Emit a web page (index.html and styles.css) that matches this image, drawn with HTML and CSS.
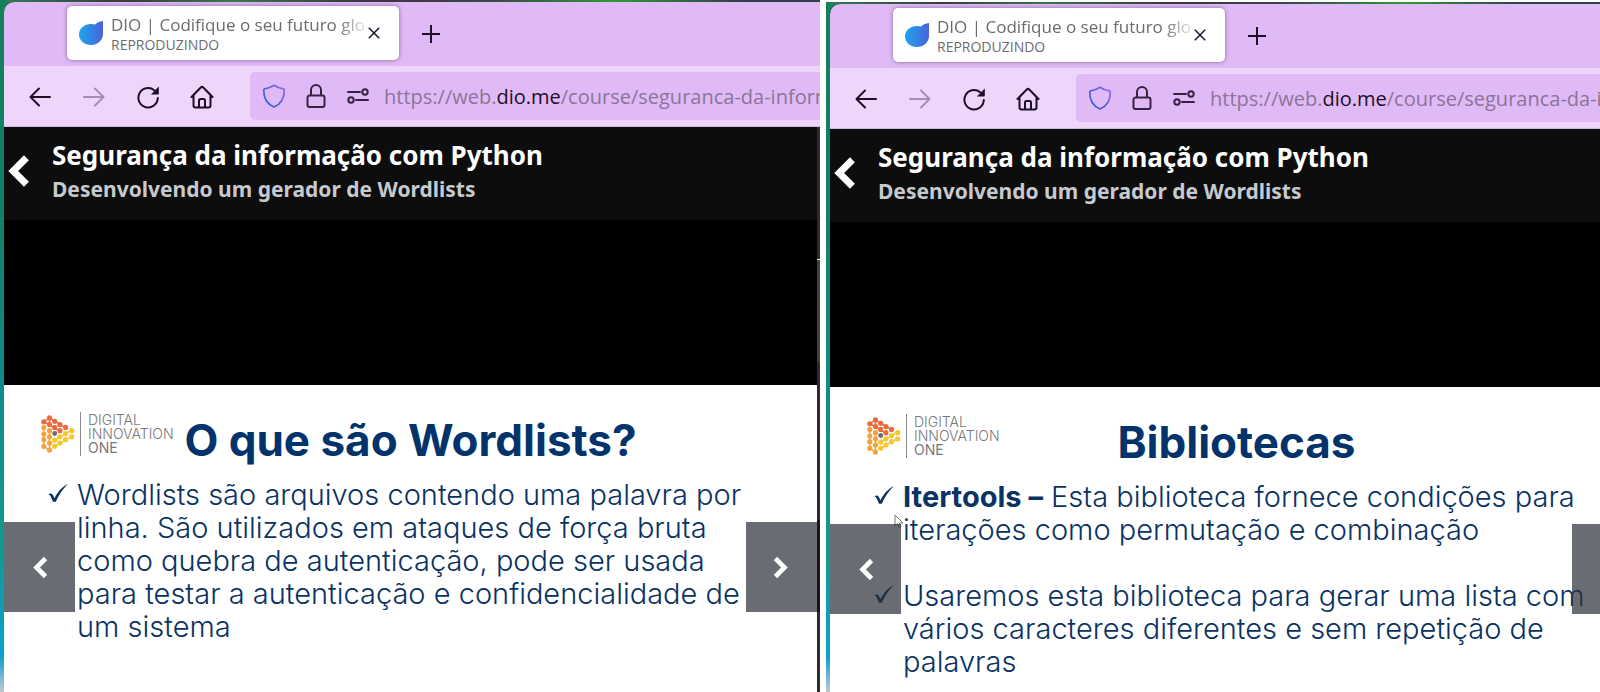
FILE: index.html
```html
<!DOCTYPE html>
<html lang="pt-BR">
<head>
<meta charset="utf-8">
<title>DIO | Codifique o seu futuro global</title>
<link rel="stylesheet" href="styles.css">
</head>
<body>
<svg class="defs" width="0" height="0" aria-hidden="true">
  <defs>
    <linearGradient id="drop-fill" x1="0" y1="0" x2="1" y2="0"><stop offset="0" stop-color="#1ba6ec"/><stop offset="1" stop-color="#4a62da"/></linearGradient>
    <linearGradient id="shield-stroke" x1="0" y1="1" x2="1" y2="0"><stop offset="0.2" stop-color="#3a5bd0"/><stop offset="1" stop-color="#9a63ee"/></linearGradient>
    <symbol id="drop" viewBox="0 0 24 24"><path d="M24 0v13.500C23.500 19.500 18.500 24 12 24 5.300 24 0 19.500 0 13.500S5.500 3 12 3c1.500 0 2.800.2 4 .6C18 1.500 20.800.3 24 0z" fill="url(#drop-fill)"/></symbol>
    <symbol id="close" viewBox="0 0 12 12"><path d="M.8.8l10.400 10.400M11.200.8L.8 11.200" stroke="currentColor" stroke-width="1.500" fill="none"/></symbol>
    <symbol id="plus" viewBox="0 0 18 18"><path d="M9 0v18M0 9h18" stroke="currentColor" stroke-width="2" fill="none"/></symbol>
    <symbol id="back" viewBox="0 0 24 24"><path d="M22 12H2.500M11 3.500L2.500 12l8.500 8.500" stroke="currentColor" stroke-width="2" fill="none" stroke-linecap="round" stroke-linejoin="round"/></symbol>
    <symbol id="forward" viewBox="0 0 24 24"><path d="M2 12h19.500M13 3.500l8.500 8.500-8.500 8.500" stroke="currentColor" stroke-width="2" fill="none" stroke-linecap="round" stroke-linejoin="round"/></symbol>
    <symbol id="reload" viewBox="0 0 24 24"><path d="M21.800 13A9.700 9.700 0 1 1 18.200 5.200" stroke="currentColor" stroke-width="2" fill="none" stroke-linecap="round"/><path d="M22.800 1.500v7.200a.7.700 0 0 1-.7.700h-7.200z" fill="currentColor"/></symbol>
    <symbol id="home" viewBox="0 0 24 24"><path d="M1.500 12L11 2.200q1-.9 2 0L22.500 12M3.500 10.500v10a2 2 0 0 0 2 2h13a2 2 0 0 0 2-2v-10M9 22.500v-7a1.500 1.500 0 0 1 1.500-1.500h3a1.500 1.500 0 0 1 1.500 1.500v7" stroke="currentColor" stroke-width="2" fill="none" stroke-linecap="round" stroke-linejoin="round"/></symbol>
    <symbol id="shield" viewBox="0 0 24 24"><path d="M12 1.200c3 2 6.500 3.200 9.300 3.600.7.100 1 .5 1 1.200C22.300 14 19.500 20 12 23 4.500 20 1.700 14 1.700 6c0-.7.300-1.100 1-1.200C5.500 4.400 9 3.200 12 1.200z" stroke="url(#shield-stroke)" stroke-width="1.700" fill="none" stroke-linejoin="round"/></symbol>
    <symbol id="lock" viewBox="0 0 20 24"><path d="M5 11.500V6a5 5 0 0 1 10 0v5.500M3.500 11.500h13a2 2 0 0 1 2 2V21a2 2 0 0 1-2 2h-13a2 2 0 0 1-2-2v-7.500a2 2 0 0 1 2-2z" stroke="currentColor" stroke-width="2" fill="none"/></symbol>
    <symbol id="sliders" viewBox="0 0 22 16"><g stroke="currentColor" stroke-width="2" fill="none"><path d="M1 4h12M9 12h12" stroke-linecap="round"/><circle cx="18" cy="4" r="2.700"/><circle cx="4" cy="12" r="2.700"/></g></symbol>
    <symbol id="chevron-left" viewBox="0 0 20 32"><path d="M17 3.500L4.500 16 17 28.500" stroke="currentColor" stroke-width="6.500" fill="none"/></symbol>
    <symbol id="chevron-right" viewBox="0 0 20 32"><path d="M3 3.500L15.500 16 3 28.500" stroke="currentColor" stroke-width="6.500" fill="none"/></symbol>
    <symbol id="check" viewBox="0 0 20 18"><path d="M.3 10.500c1.700-1.600 3.700-1.300 4.600.6l1.600 3.200C9.500 8 13.500 3.500 19.700 0 14.500 5.500 10.500 11 7.800 17.800H5L2.700 12.500C2.200 11.300 1.500 10.700.3 10.500z" fill="currentColor"/></symbol>
    <symbol id="dots" viewBox="0 0 36 40">
      <g fill="#ea6a3c" stroke="#ea6a3c" stroke-width="1.500"><path d="M3 7l6-4 17 10.500M3 7l17 10M9 9.500V3" fill="none"/><circle cx="9" cy="3" r="2"/><circle cx="3" cy="7" r="2"/><circle cx="14.500" cy="6.500" r="2"/><circle cx="9" cy="10" r="2"/><circle cx="20" cy="10" r="2"/><circle cx="14.500" cy="13" r="2"/><circle cx="26" cy="13" r="2"/><circle cx="20" cy="16.500" r="2"/></g>
      <g fill="#f4a23c" stroke="#f4a23c" stroke-width="1.500"><path d="M3 13v20l6 4V16.500" fill="none"/><circle cx="3" cy="13" r="2"/><circle cx="3" cy="20" r="2"/><circle cx="3" cy="26" r="2"/><circle cx="3" cy="33" r="2"/><circle cx="9" cy="16.500" r="2"/><circle cx="9" cy="23" r="2"/><circle cx="9" cy="29.500" r="2"/><circle cx="9" cy="37" r="2"/></g>
      <g fill="#f7c62d" stroke="#f7c62d" stroke-width="1.500"><path d="M14.500 33l17-10M14.500 26.500l17-10" fill="none"/><circle cx="14.500" cy="33" r="2"/><circle cx="14.500" cy="26.500" r="2"/><circle cx="20" cy="29.500" r="2"/><circle cx="20" cy="23" r="2"/><circle cx="26" cy="26" r="2"/><circle cx="26" cy="19.500" r="2"/><circle cx="32.500" cy="23" r="2"/><circle cx="32.500" cy="16.500" r="2"/></g>
      <circle cx="14.500" cy="19.500" r="2.600" fill="#6b6b70"/>
    </symbol>
  </defs>
</svg>
<main class="compare">
  <section class="shot">
    <div class="window">
      <div class="tabs">
        <div class="tab">
          <svg class="tab-icon"><use href="#drop"/></svg>
          <div class="tab-text"><div class="tab-title">DIO | Codifique o seu futuro glo</div><div class="tab-state">REPRODUZINDO</div></div>
          <button class="tab-close" aria-label="Fechar aba"><svg><use href="#close"/></svg></button>
        </div>
        <button class="new-tab" aria-label="Nova aba"><svg><use href="#plus"/></svg></button>
      </div>
      <div class="toolbar">
        <div class="tools">
          <button class="tool" aria-label="Voltar"><svg><use href="#back"/></svg></button>
          <button class="tool tool-off" aria-label="Avançar"><svg><use href="#forward"/></svg></button>
          <button class="tool" aria-label="Recarregar"><svg><use href="#reload"/></svg></button>
          <button class="tool" aria-label="Página inicial"><svg><use href="#home"/></svg></button>
        </div>
        <div class="address">
          <svg class="shield"><use href="#shield"/></svg><svg class="lock"><use href="#lock"/></svg><svg class="sliders"><use href="#sliders"/></svg>
          <div class="url" role="textbox" contenteditable="true" spellcheck="false" aria-label="Endereço">https://web.<span class="domain">dio.me</span>/course/seguranca-da-inform</div>
        </div>
      </div>
      <div class="page">
        <div class="content">
          <header class="course">
            <button class="course-back" aria-label="Voltar ao curso"><svg><use href="#chevron-left"/></svg></button>
            <div><h1 class="course-title">Segurança da informação com Python</h1><p class="course-lesson">Desenvolvendo um gerador de Wordlists</p></div>
          </header>
          <div class="video">
            <article class="slide">
              <div class="slide-head">
                <div class="brand"><svg class="brand-mark"><use href="#dots"/></svg><div class="brand-name">DIGITAL<br>INNOVATION<br><span class="brand-one">ONE</span></div></div>
                <h2 class="slide-title">O que são Wordlists?</h2>
              </div>
              <ul class="points">
                <li class="point"><svg class="check"><use href="#check"/></svg><p>Wordlists são arquivos contendo uma palavra por<br>linha. São utilizados em ataques de força bruta<br>como quebra de autenticação, pode ser usada<br>para testar a autenticação e confidencialidade de<br>um sistema</p></li>
              </ul>
              <button class="nav nav-prev" aria-label="Anterior"><svg><use href="#chevron-left"/></svg></button>
              <button class="nav nav-next" aria-label="Próximo"><svg><use href="#chevron-right"/></svg></button>
            </article>
          </div>
        </div>
        <div class="scroll"></div>
      </div>
    </div>
  </section>
  <section class="shot shot-second">
    <div class="window">
      <div class="tabs">
        <div class="tab">
          <svg class="tab-icon"><use href="#drop"/></svg>
          <div class="tab-text"><div class="tab-title">DIO | Codifique o seu futuro glo</div><div class="tab-state">REPRODUZINDO</div></div>
          <button class="tab-close" aria-label="Fechar aba"><svg><use href="#close"/></svg></button>
        </div>
        <button class="new-tab" aria-label="Nova aba"><svg><use href="#plus"/></svg></button>
      </div>
      <div class="toolbar">
        <div class="tools">
          <button class="tool" aria-label="Voltar"><svg><use href="#back"/></svg></button>
          <button class="tool tool-off" aria-label="Avançar"><svg><use href="#forward"/></svg></button>
          <button class="tool" aria-label="Recarregar"><svg><use href="#reload"/></svg></button>
          <button class="tool" aria-label="Página inicial"><svg><use href="#home"/></svg></button>
        </div>
        <div class="address">
          <svg class="shield"><use href="#shield"/></svg><svg class="lock"><use href="#lock"/></svg><svg class="sliders"><use href="#sliders"/></svg>
          <div class="url" role="textbox" contenteditable="true" spellcheck="false" aria-label="Endereço">https://web.<span class="domain">dio.me</span>/course/seguranca-da-in</div>
        </div>
      </div>
      <div class="page">
        <div class="content">
          <header class="course">
            <button class="course-back" aria-label="Voltar ao curso"><svg><use href="#chevron-left"/></svg></button>
            <div><h1 class="course-title">Segurança da informação com Python</h1><p class="course-lesson">Desenvolvendo um gerador de Wordlists</p></div>
          </header>
          <div class="video">
            <article class="slide">
              <div class="slide-head">
                <div class="brand"><svg class="brand-mark"><use href="#dots"/></svg><div class="brand-name">DIGITAL<br>INNOVATION<br><span class="brand-one">ONE</span></div></div>
                <h2 class="slide-title">Bibliotecas</h2>
              </div>
              <ul class="points">
                <li class="point"><svg class="check"><use href="#check"/></svg><p><strong>Itertools –</strong> Esta biblioteca fornece condições para<br>iterações como permutação e combinação</p></li>
                <li class="point"><svg class="check"><use href="#check"/></svg><p>Usaremos esta biblioteca para gerar uma lista com<br>vários caracteres diferentes e sem repetição de<br>palavras</p></li>
              </ul>
              <svg class="pointer" viewBox="0 0 10 15"><path d="M1 1v11l2.500-2.300 1.700 4 1.800-.8-1.700-3.900H9z" fill="#fff" stroke="#777" stroke-width="1"/></svg>
              <button class="nav nav-prev" aria-label="Anterior"><svg><use href="#chevron-left"/></svg></button>
              <button class="nav nav-next" aria-label="Próximo"><svg><use href="#chevron-right"/></svg></button>
            </article>
          </div>
        </div>
        <div class="scroll"></div>
      </div>
    </div>
  </section>
</main>
</body>
</html>
```

FILE: styles.css
```css
* { box-sizing: border-box; }
body { margin: 0; background: #fff; font-family: "Open Sans", "Noto Sans", sans-serif; }
h1, h2, p, ul { margin: 0; padding: 0; }
ul { list-style: none; }
button { padding: 0; border: 0; background: none; color: inherit; display: flex; align-items: center; justify-content: center; flex: none; }
svg { display: block; flex: none; }
.defs { position: absolute; }

.compare { display: grid; grid-template-columns: 820fr 774fr; gap: 6px; min-height: 100vh; }
.shot { display: flex; min-width: 0; overflow: hidden; padding: 2px 0 0 4px; background: linear-gradient(90deg, transparent 4px, #2f7d52 4px, #3b3a40 15%, #357a45 28%, #3b3440 45%, #3a4a44 60%, #2e9a32 75%, #33404a 90%) 0 0 / 100% 2px no-repeat, linear-gradient(#14805a, #12806a 30%, #108a8c 55%, #109a94 80%, #10a0d0 95%, #c0c8d4); }
.shot-second { margin-top: 2px; }
.window { flex: 1 0 auto; min-width: 816px; width: 100%; display: flex; flex-direction: column; border-top-left-radius: 10px; overflow: hidden; background: #000; }

.tabs { height: 64px; background: #e0baf7; display: flex; align-items: flex-start; padding: 4px 0 0 63px; gap: 23px; color: #1c0f26; }
.tab { width: 332px; height: 54px; background: #fff; border-radius: 5px; box-shadow: 0 0 4px rgba(60, 30, 80, .55); display: flex; align-items: center; padding: 0 19px 0 12px; }
.tab-icon { width: 24px; height: 24px; margin-right: 8px; }
.tab-text { flex: 1; min-width: 0; color: #6c6b70; padding-bottom: 2px; }
.tab-title { font-size: 17px; line-height: 24px; white-space: nowrap; -webkit-mask-image: linear-gradient(90deg, #000 226px, transparent 260px); mask-image: linear-gradient(90deg, #000 226px, transparent 260px); }
.tab-state { font-size: 14px; line-height: 15px; }
.tab-close svg { width: 12px; height: 12px; }
.tab-close { margin-left: 3px; }
.new-tab { height: 56px; }
.new-tab svg { width: 18px; height: 18px; }

.toolbar { height: 61px; background: #edd6f9; border-bottom: 1px solid #cdbcd9; display: flex; align-items: center; color: #1c0f26; }
.tools { display: flex; gap: 30px; padding: 2px 36px 0 24px; }
.tool svg { width: 24px; height: 24px; }
.tool-off { color: #a48fb2; }
.address { flex: 1; min-width: 0; height: 48px; background: #e0baf7; border-radius: 5px 0 0 5px; display: flex; align-items: center; padding-left: 12px; overflow: hidden; }
.shield { width: 24px; height: 24px; margin-right: 20px; }
.lock { width: 20px; height: 24px; margin-right: 21px; color: #362242; }
.sliders { width: 22px; height: 16px; margin-right: 15px; color: #362242; }
.url { flex: 1; min-width: 0; overflow: hidden; white-space: nowrap; padding-top: 2px; font-size: 20px; line-height: 32px; color: #8b7498; }
.domain { color: #1c0f26; }

.page { flex: 1; display: flex; min-height: 0; }
.content { flex: 1; min-width: 0; display: flex; flex-direction: column; }
.scroll { width: 3px; background: linear-gradient(#2b2b2d 132px, #e8e8e8 132px 133px, #403f43 133px 235px, #2b2b2f 235px 393px, #16171a 393px 485px, #2c2d30 485px); }
.course { height: 93px; background: #0d0d0d; display: flex; align-items: center; gap: 22px; padding-left: 4px; padding-bottom: 6px; color: #fff; font-family: "Noto Sans", "Open Sans", sans-serif; }
.course-back svg { width: 22px; height: 34px; }
.course-title { font-size: 26px; line-height: 36px; font-weight: 700; white-space: nowrap; }
.course-lesson { font-size: 21px; line-height: 32px; font-weight: 700; color: #c6c9ce; white-space: nowrap; }
.video { flex: 1; display: flex; background: #000; padding-top: 165px; }

.slide { position: relative; flex: 1; background: #fff; color: #0a3263; font-family: Inter, "Noto Sans", sans-serif; padding-top: 26px; }
.slide-head { display: grid; align-items: start; }
.brand, .slide-title { grid-area: 1 / 1; }
.brand { display: flex; align-items: center; justify-self: start; margin-left: 37px; padding-top: 1px; }
.brand-mark { width: 34px; height: 40px; margin-right: 5px; }
.brand-name { border-left: 1px solid #8a8a8e; padding: 1px 0 1px 7px; font-size: 14px; line-height: 14px; font-weight: 300; color: #77777b; }
.brand-one { font-weight: 400; }
.slide-title { text-align: center; font-size: 44px; line-height: 58px; font-weight: 700; color: #03336b; white-space: nowrap; }
.points { display: grid; gap: 33px; padding: 9px 0 0 44px; }
.point { display: flex; gap: 9px; font-size: 29px; line-height: 33px; font-weight: 300; white-space: nowrap; }
.point strong { font-weight: 700; }
.check { width: 20px; height: 18px; margin-top: 6px; }

.nav { position: absolute; top: 137px; width: 71px; height: 90px; background: rgba(42, 47, 56, .7); color: #fff; }
.nav svg { width: 15px; height: 23px; }
.nav-prev { left: 0; padding-left: 2px; }
.nav-next { right: 0; padding-right: 3px; }
.pointer { position: absolute; left: 64px; top: 127px; width: 10px; height: 15px; }
```
